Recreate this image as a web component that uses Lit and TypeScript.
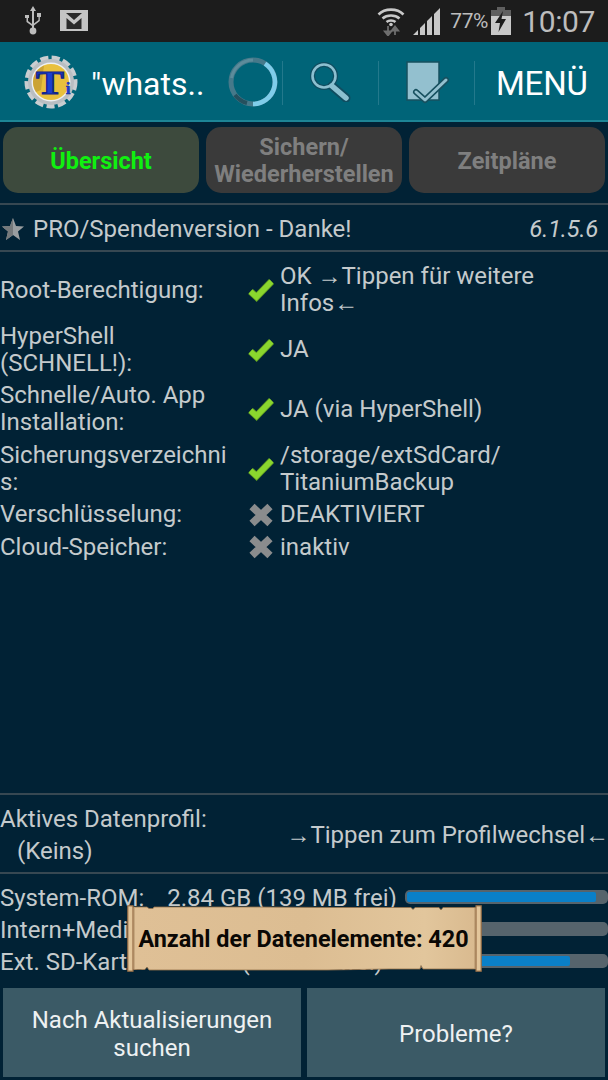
import { LitElement, html, css, svg } from "lit";
import { customElement } from "lit/decorators.js";

const check = svg`<svg class="mark" viewBox="0 0 26 26" fill="none"><path d="M2.500 14.500 L8.500 20 L23.500 4.500" stroke="#5f9a22" stroke-width="7"/><path d="M2.500 14.500 L8.500 20 L23.500 4.500" stroke="#8ad62e" stroke-width="5.400"/></svg>`;
const cross = svg`<svg class="mark" viewBox="0 0 26 26" fill="none"><path d="M4 4.500 L22 21.500 M22 4.500 L4 21.500" stroke="#8a8c8d" stroke-width="7.500"/></svg>`;

const parchment = svg`<svg class="paper" viewBox="0 0 355 67">
  <defs>
    <linearGradient id="p" x1="0" x2="1" y1="0" y2="0">
      <stop offset="0" stop-color="#dfc096"/><stop offset=".5" stop-color="#dcbd92"/><stop offset=".85" stop-color="#e2c69c"/><stop offset="1" stop-color="#d9ba8f"/>
    </linearGradient>
  </defs>
  <path d="M6 2 H20 L22 3.500 H26 L27 2 H130 L200 2.500 H284 L286 4.500 L288 2.500 H312 L314 5 L316 2.500 H349 V64 H296 L294 60.500 L293 64 H262 L200 65 H60 H22 L20 62 L18 64.500 H6 Z" fill="url(#p)" stroke="#94714a" stroke-width=".8"/>
  <rect x=".8" y=".8" width="5.200" height="65.400" fill="#e3c69b" stroke="#946c45" stroke-width="1.200"/>
  <rect x="349" y=".8" width="5.200" height="65.400" fill="#e3c69b" stroke="#946c45" stroke-width="1.200"/>
  <path d="M7 3 V64" stroke="#b3926a" stroke-width="1.500" opacity=".7"/>
  <path d="M348 3 V64" stroke="#b3926a" stroke-width="1.500" opacity=".7"/>
</svg>`;

@customElement("app-root")
export class AppRoot extends LitElement {
  static styles = css`
    :host { display: block; width: 608px; height: 1080px; overflow: hidden; background: #012235; color: #c4cacc; font-family: Roboto, "Liberation Sans", sans-serif; position: relative; }
    .status { height: 42px; background: #1c1c1c; display: flex; align-items: center; color: #bdbdbd; padding: 0 13px 0 24px; }
    .status svg { display: block; flex: none; }
    .usb { width: 18px; height: 30px; }
    .gm { width: 28px; height: 21px; margin-left: 18px; margin-top: -1px; }
    .wifi { width: 28px; height: 30px; margin-left: auto; }
    .signal { width: 27px; height: 27px; margin-left: 8px; }
    .pct { font-size: 21px; margin-left: 10px; width: 37px; letter-spacing: -0.4px; white-space: nowrap; }
    .batt { width: 20px; height: 28px; margin-left: 4px; }
    .time { font-size: 30px; margin-left: 11px; white-space: nowrap; letter-spacing: -0.4px; }
    .bar { height: 78px; background: #006478; border-bottom: 2px solid #1d8596; display: flex; align-items: center; }
    .logo { width: 54px; height: 54px; margin-left: 24px; margin-top: 2px; flex: none; }
    .query { font-size: 32px; color: #fff; width: 136px; margin-left: 13px; margin-top: 5px; white-space: nowrap; }
    .spin { width: 52px; height: 52px; flex: none; margin-top: 2px; }
    .sep { width: 1px; height: 44px; background: #23798c; flex: none; margin-top: 4px; }
    .search { width: 42px; height: 40px; margin: 2px 27px 0 26px; flex: none; }
    .cb { width: 46px; height: 44px; margin: 4px 23px 0 26px; flex: none; }
    .menu { font-size: 33px; color: #fff; margin-left: 21px; margin-top: 5px; white-space: nowrap; letter-spacing: -0.2px; }
    .tabs { display: grid; grid-template-columns: repeat(3, 196px); gap: 7px; padding: 5px 3px 10px; }
    .tab { height: 66px; border-radius: 15px; background: #3a3a3a; color: #7f7f7f; font-weight: 700; font-size: 23.500px; line-height: 27px; padding-top: 2px; box-sizing: border-box; display: flex; align-items: center; justify-content: center; text-align: center; }
    .tab.on { background: #3d4a3d; color: #10f010; }
    .pro { border-top: 2px solid #374852; border-bottom: 2px solid #374852; height: 42px; display: flex; align-items: center; font-size: 24px; padding: 3px 10px 0 2px; }
    .star { width: 22px; height: 22px; margin-right: 9px; flex: none; }
    .ver { margin-left: auto; font-style: italic; letter-spacing: -0.3px; }
    .info { display: grid; grid-template-columns: 248px 32px 1fr; row-gap: 5px; padding-top: 11px; font-size: 24px; line-height: 27.300px; height: 541px; box-sizing: border-box; align-content: start; }
    .k { word-break: break-all; padding-right: 16px; align-self: center; }
    .k2 { word-break: normal; }
    .m { align-self: center; display: flex; }
    .mark { width: 26px; height: 26px; display: block; }
    .v { align-self: center; padding-right: 20px; }
    .profile { border-top: 2px solid #374852; border-bottom: 2px solid #374852; height: 74px; display: flex; align-items: center; justify-content: space-between; font-size: 24px; padding: 3px 0 0 0; line-height: 32px; }
    .profile .hint { margin-right: -1px; }
    .indent { padding-left: 17px; }
    .storage { height: 114px; box-sizing: border-box; padding-top: 8px; }
    .s { display: flex; height: 32px; align-items: center; font-size: 24px; white-space: nowrap; }
    .s .lab { width: 405px; overflow: hidden; flex: none; }
    .gap { display: inline-block; width: 5px; }
    .track { flex: 1; height: 14px; margin-top: -3px; background: #56646c; border-radius: 5px; overflow: hidden; padding: 2px 0 2px 2px; box-sizing: border-box; }
    .fill { height: 100%; background: #0a80c8; border-radius: 2px; }
    .btns { display: grid; grid-template-columns: 298px 298px; gap: 6px; padding: 0 3px; }
    .btn { height: 89px; background: #3b5a66; color: #eef1f2; font-size: 24px; line-height: 28px; display: flex; align-items: center; justify-content: center; text-align: center; padding: 3px 20px 0; box-sizing: border-box; }
    .toast { position: absolute; left: 127px; top: 905px; width: 355px; height: 67px; color: #0a0805; font-weight: 700; font-size: 23.400px; display: flex; align-items: center; justify-content: center; white-space: nowrap; }
    .paper { position: absolute; inset: 0; width: 355px; height: 67px; }
    .toast span { position: relative; margin-right: 2px; }
  `;

  render() {
    return html`
      <div class="status">
        <svg class="usb" viewBox="0 0 18 30" fill="#bdbdbd">
          <path d="M9 0 L12 5 H10 V23 H8 V5 H6 Z"/><circle cx="9" cy="25" r="3.400"/>
          <path d="M1 9 h4 v3 h-1 v3 l4 3 v2 l-5.500 -4 v-4 h-1.500 Z"/>
          <path d="M13 7 h4 v4 h-1.200 v4 l-5.800 4.500 v-2 l4.500 -3.500 v-3 h-1.500 Z"/>
        </svg>
        <svg class="gm" viewBox="0 0 28 21">
          <rect width="28" height="21" fill="#c4c4c4"/>
          <rect x="3" y="3" width="22" height="16" fill="#2a2a2a"/>
          <path d="M3 3 H6 L14 10 L22 3 H25 V19 H21.500 V8 L14 14.500 L6.500 8 V19 H3 Z" fill="#c4c4c4"/>
        </svg>
        <svg class="wifi" viewBox="0 0 28 30" fill="none" stroke="#c8c8c8" stroke-width="2.600">
          <path d="M1.500 8.500 C8 2 20 2 26.500 8.500"/><path d="M5.500 12.500 C10 8.500 18 8.500 22.500 12.500"/><path d="M9.500 16 C12 14 16 14 18.500 16"/>
          <circle cx="14" cy="18.500" r="1.800" fill="#c8c8c8" stroke="none"/>
          <path d="M11 20 V29 M7.800 25.500 L11 29.500 L14.200 25.500 Z" stroke="#6e6e6e" fill="#6e6e6e" stroke-width="1.800"/>
          <path d="M18 29 V21 M14.800 24.500 L18 20.500 L21.200 24.500 Z" stroke="#6e6e6e" fill="#6e6e6e" stroke-width="1.800"/>
        </svg>
        <svg class="signal" viewBox="0 0 27 27" fill="#c8c8c8">
          <path d="M0 27 L5 22 V27 Z M7 27 V20 L12 15 V27 Z M14 27 V13 L19 8 V27 Z M21 27 V6 L27 0 V27 Z"/>
        </svg>
        <span class="pct">77%</span>
        <svg class="batt" viewBox="0 0 20 28">
          <rect x="6" y="0" width="8" height="3" fill="#5f5f5f"/>
          <rect x="0" y="3" width="20" height="6" fill="#5f5f5f"/>
          <rect x="0" y="9" width="20" height="19" fill="#c8c8c8"/>
          <path d="M12 4 L4 16 H9 L7.500 25 L15 12 H10.500 Z" fill="#1c1c1c"/>
        </svg>
        <span class="time">10:07</span>
      </div>
      <div class="bar">
        <svg class="logo" viewBox="0 0 54 54">
          <circle cx="27" cy="27" r="24" fill="none" stroke="#c9cdd0" stroke-width="5" stroke-dasharray="8 3.300"/>
          <circle cx="27" cy="27" r="23" fill="#b9bec2"/>
          <circle cx="27" cy="27" r="19.500" fill="#eef0f1"/>
          <circle cx="27" cy="27" r="18" fill="#e8c03c"/>
          <path d="M12 37 A18 18 0 0 1 20 10.500 L17 35 Z" fill="#b88f2e" opacity=".6"/>
          <text x="26" y="39" text-anchor="middle" textLength="28" lengthAdjust="spacingAndGlyphs" font-family="Liberation Serif, serif" font-weight="700" font-size="33" fill="#1b3fd0" stroke="#10248a" stroke-width="1.200">T</text>
          <text x="44" y="39" text-anchor="middle" font-family="Liberation Serif, serif" font-weight="700" font-size="17" fill="#1b3fd0" stroke="#10248a" stroke-width=".5">i</text>
        </svg>
        <span class="query">"whats..</span>
        <svg class="spin" viewBox="0 0 52 52" fill="none">
          <circle cx="26" cy="26" r="22" stroke="#46798a" stroke-width="5"/>
          <path d="M26 48 A22 22 0 0 0 38 7.600" stroke="#7fcdea" stroke-width="4.600"/>
          <path d="M8 39 A22 22 0 0 0 20 47" stroke="#25505e" stroke-width="4"/>
          <path d="M4.500 22 A22 22 0 0 1 26 4" stroke="#5d8c9b" stroke-width="3"/>
        </svg>
        <span class="sep" style="margin-left:3px"></span>
        <svg class="search" viewBox="0 0 42 40" fill="none">
          <path d="M23 24 L37 36" stroke="#104d60" stroke-width="9" stroke-linecap="round"/>
          <circle cx="15" cy="14" r="11.500" stroke="#104d60" stroke-width="5"/>
          <circle cx="15" cy="14" r="11.500" stroke="#8cc0d0" stroke-width="2.600"/>
          <path d="M23 24 L37 36" stroke="#8cc0d0" stroke-width="5.500" stroke-linecap="round"/>
        </svg>
        <span class="sep"></span>
        <svg class="cb" viewBox="0 0 46 44">
          <rect x="2" y="1" width="32" height="38" fill="#93c0cf" stroke="#17505f" stroke-width="1.500"/>
          <path d="M11 31 L20 39 L41 19" fill="none" stroke="#17505f" stroke-width="6" stroke-linecap="round" stroke-linejoin="round"/>
          <path d="M11 31 L20 39 L41 19" fill="none" stroke="#93c0cf" stroke-width="3" stroke-linecap="round" stroke-linejoin="round"/>
        </svg>
        <span class="sep"></span>
        <span class="menu">MENÜ</span>
      </div>
      <div class="tabs">
        <div class="tab on">Übersicht</div>
        <div class="tab">Sichern/<br />Wiederherstellen</div>
        <div class="tab">Zeitpläne</div>
      </div>
      <div class="pro">
        <svg class="star" viewBox="0 0 22 22"><path d="M11 0 L14 8 L22 8.500 L16 13.500 L18 22 L11 17 L4 22 L6 13.500 L0 8.500 L8 8 Z" fill="#9a9ea0"/><path d="M11 0 L11 17 L4 22 L6 13.500 L0 8.500 L8 8 Z" fill="#75797b"/></svg>
        <span>PRO/Spendenversion - Danke!</span>
        <span class="ver">6.1.5.6</span>
      </div>
      <div class="info">
        <div class="k">Root-Berechtigung:</div><div class="m">${check}</div><div class="v">OK →Tippen für weitere Infos←</div>
        <div class="k k2">HyperShell<br />(SCHNELL!):</div><div class="m">${check}</div><div class="v">JA</div>
        <div class="k k2">Schnelle/Auto. App Installation:</div><div class="m">${check}</div><div class="v">JA (via HyperShell)</div>
        <div class="k">Sicherungsverzeichnis:</div><div class="m">${check}</div><div class="v">/storage/extSdCard/<br />TitaniumBackup</div>
        <div class="k">Verschlüsselung:</div><div class="m">${cross}</div><div class="v">DEAKTIVIERT</div>
        <div class="k">Cloud-Speicher:</div><div class="m">${cross}</div><div class="v">inaktiv</div>
      </div>
      <div class="profile">
        <div>Aktives Datenprofil:<br /><span class="indent">(Keins)</span></div>
        <div class="hint">→Tippen zum Profilwechsel←</div>
      </div>
      <div class="storage">
        <div class="s"><div class="lab">System-ROM: &nbsp;&nbsp;<span class="gap"></span>2.84 GB (139 MB frei)</div><div class="track"><div class="fill" style="width:94%"></div></div></div>
        <div class="s"><div class="lab">Intern+Medien: 9.83 GB (2.16 GB frei)</div><div class="track"><div class="fill" style="width:36%"></div></div></div>
        <div class="s"><div class="lab">Ext. SD-Karte: 58.6 GB (14.1 GB frei)</div><div class="track"><div class="fill" style="width:81%"></div></div></div>
      </div>
      <div class="btns">
        <div class="btn">Nach Aktualisierungen suchen</div>
        <div class="btn">Probleme?</div>
      </div>
      <div class="toast">${parchment}<span>Anzahl der Datenelemente: 420</span></div>
    `;
  }
}
